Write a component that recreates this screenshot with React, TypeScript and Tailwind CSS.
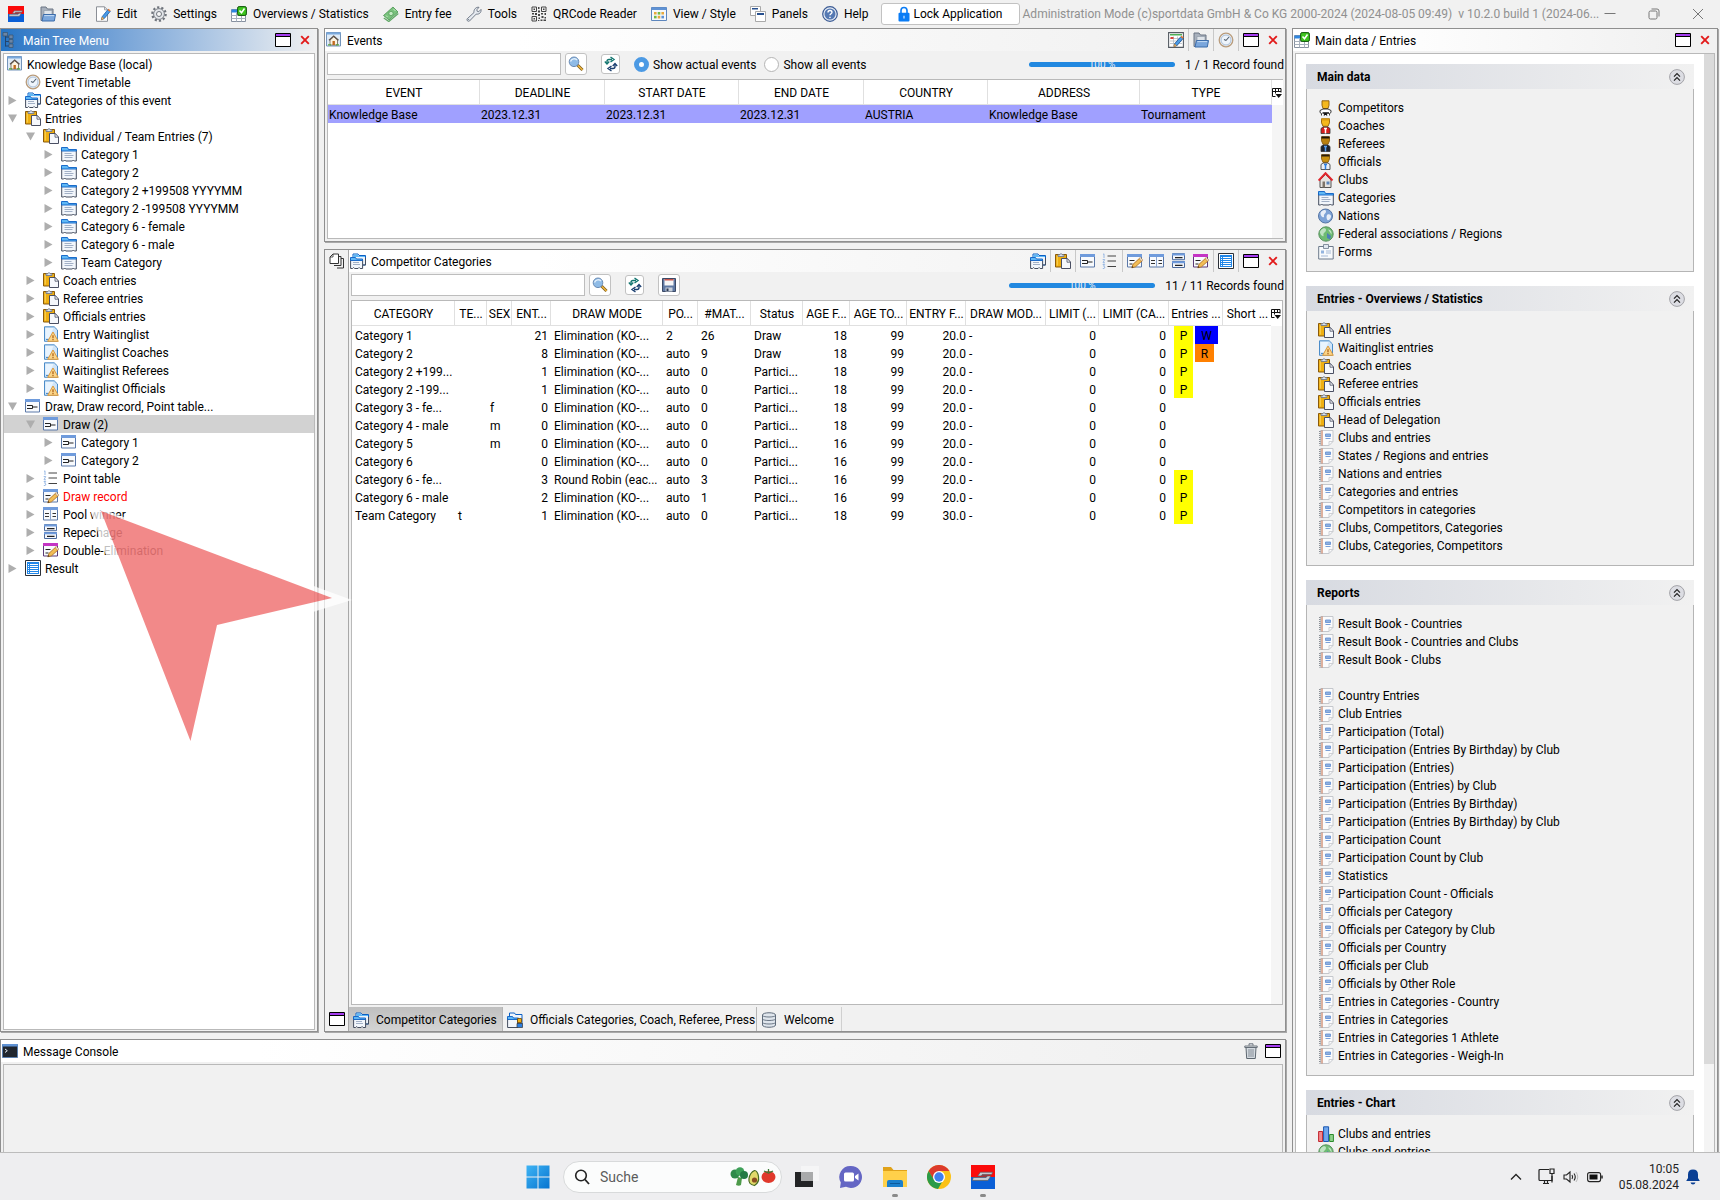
import type { ComponentType, ReactNode } from "react";
import clsx from "clsx";

type IconProps = { className?: string };
type Icon = ComponentType<IconProps>;

function Svg({ children, className, box = "0 0 16 16" }: { children: ReactNode; className?: string; box?: string }) {
  return (
    <svg viewBox={box} className={clsx("shrink-0", className ?? "size-4")} fill="none" aria-hidden="true">
      {children}
    </svg>
  );
}

/* ===== App icons ===== */
const Logo: Icon = (p) => (
  <Svg {...p}>
    <path d="M0 0h16v8H0z" fill="#fb0a0a" />
    <path d="M0 8h16v8H0z" fill="#0b5fd6" />
    <path d="M14.500 4.800H6.200L4.500 7.300h6.300l-.7 1H1.500l-.6 2h10.400l2-3H7l.5-1h6.300z" fill="#c9ccd2" stroke="#555b66" strokeWidth=".5" />
  </Svg>
);

const FolderOpen: Icon = (p) => (
  <Svg {...p}>
    <path d="M1 1h5l1.500 2H13v11.500H1z" fill="#a9b1bd" stroke="#6b7583" />
    <path d="M4 4.500h8v5H4z" fill="#dfe4ea" stroke="#8a95a3" strokeWidth=".6" />
    <path d="M3.500 8.500h12l-1.200 6.500H2z" fill="#7aa6dc" stroke="#3b6cab" />
    <path d="M4.300 9.600h9.800" stroke="#c4dbf4" />
  </Svg>
);

const EditPage: Icon = (p) => (
  <Svg {...p}>
    <path d="M1.500.8h8l3 3v11.500h-11z" fill="#fff" stroke="#8b8f96" />
    <path d="M9.500.8v3h3" stroke="#8b8f96" strokeWidth=".8" />
    <path d="M6.500 13.500l.8-3L13 3.500l2.300 1.800L9.300 12.500z" fill="#4a9be6" stroke="#1c5fae" strokeWidth=".8" />
    <path d="M6.300 14l.8-3.100 1.900 1.700z" fill="#f6c56c" stroke="#b5702a" strokeWidth=".5" />
    <path d="M12.600 4l1-1.200 2 1.700-1 1.200z" fill="#e8772e" />
  </Svg>
);

const EditTable: Icon = (p) => (
  <Svg {...p}>
    <path d="M.6.600h14.800v14.800H.6z" fill="#fff" stroke="#555b63" strokeWidth="1.100" />
    <path d="M2 2h12v1.500H2z" fill="#4fae57" />
    <path d="M2 6.500h12M2 9h12M2 11.500h12M5.500 4.500v9.500M9.500 4.500v9.500" stroke="#b6bcc4" strokeWidth=".8" />
    <path d="M2.500 5h3v2h-3z" fill="#d9433a" />
    <path d="M6 14.500l.8-3L13 4.500l2.300 1.800L9 13.500z" fill="#4a9be6" stroke="#1c4f8e" strokeWidth=".8" />
    <path d="M5.800 15l.8-3 1.900 1.500z" fill="#f6c56c" stroke="#b5702a" strokeWidth=".5" />
    <path d="M12.600 5l1-1.200 2 1.700-1 1.200z" fill="#e8772e" />
  </Svg>
);

const Gear: Icon = (p) => (
  <Svg {...p}>
    <circle cx="8" cy="8" r="6.700" stroke="#6f747c" strokeWidth="2.200" strokeDasharray="2.200 2.010" />
    <circle cx="8" cy="8" r="5.400" fill="#e2e5e9" stroke="#71767e" strokeWidth=".9" />
    <circle cx="8" cy="8" r="2.500" fill="#f6f6f6" stroke="#71767e" />
  </Svg>
);

const TableCheck: Icon = (p) => (
  <Svg {...p}>
    <path d="M.5 3.500h14v12H.5z" fill="#fff" stroke="#8791a0" />
    <path d="M.5 3.500h9v3h-9z" fill="#2f86e0" />
    <path d="M.5 9.500h14M.5 12.500h14M5.500 6.500v9M10.500 6.500v9" stroke="#a8b1bd" />
    <rect x="6.600" y=".6" width="8.800" height="8.800" rx="1.500" fill="#3dc41e" stroke="#12550c" />
    <path d="M8.500 4.500l2 2.300 3-4.300" stroke="#fff" strokeWidth="1.500" />
  </Svg>
);

const Money: Icon = (p) => (
  <Svg {...p}>
    <path d="M.5 9.500L10 1l5 5-9 8z" fill="#79c27d" stroke="#4a9650" strokeWidth=".8" />
    <path d="M.8 12l5 3.500L15.300 7.500" stroke="#5fa865" strokeWidth="1.300" />
    <circle cx="8" cy="7.500" r="2.200" fill="#c3eac2" stroke="#4a9650" strokeWidth=".7" />
    <path d="M3 9.500l1.500 1.500M10.500 3l2 2" stroke="#c3eac2" />
  </Svg>
);

const Wrench: Icon = (p) => (
  <Svg {...p}>
    <path
      d="M1.200 12.800L8 6.500C7.500 3.500 10 .8 13 1.300L10.800 3.800l.4 1.500 1.600.4 2.200-2.300c.6 3-1.800 5.200-4.800 4.700L3.500 15c-1.500 1-3.300-.8-2.300-2.200z"
      fill="#e6eaf0"
      stroke="#66707f"
      strokeWidth=".9"
    />
    <circle cx="2.600" cy="13.500" r=".6" fill="#66707f" />
  </Svg>
);

const QrCode: Icon = (p) => (
  <Svg {...p}>
    <path d="M1 1h4.500v4.500H1zM10.500 1H15v4.500h-4.500zM1 10.500h4.500V15H1z" stroke="#444" />
    <path
      d="M2.500 2.500H4V4H2.500zM12 2.500h1.500V4H12zM2.500 12H4v1.500H2.500zM7 1h1.500v2H7zM7 4.500h2v2H7zM1 7h2v1.500H1zM4 7h2v2H4zM7 8h2v2H7zM10 7h2v1.500h-2zM13.500 7H15v2h-1.500zM10.500 10h2v2h-2zM7.500 11.500H9V13H7.500zM13.500 11H15v1.500h-1.500zM9.500 13.500h2V15h-2zM12.500 13.500H15V15h-2.500zM7 14h1.300v1H7z"
      fill="#444"
    />
  </Svg>
);

const ViewStyle: Icon = (p) => (
  <Svg {...p}>
    <path d="M.5 1.500h15v13H.5z" fill="#f4f8fd" stroke="#5d86bd" />
    <path d="M.5 1.500h15v2.500H.5z" fill="#5f92d4" />
    <path d="M3 6h2.600v2.600H3zM10.400 6H13v2.600h-2.600zM6.700 9.800h2.600v2.600H6.700z" fill="#e9a93c" />
    <path d="M6.700 6h2.600v2.600H6.700z" fill="#72b945" />
    <path d="M3 9.800h2.600v2.600H3z" fill="#72b945" />
    <path d="M10.400 9.800H13v2.600h-2.600z" fill="#5f92d4" />
  </Svg>
);

const PanelsIcon: Icon = (p) => (
  <Svg {...p}>
    <path d="M.5.5h10v9H.5z" fill="#fff" stroke="#a9a9a9" />
    <path d="M2 2h6v1.500H2z" fill="#27508f" />
    <path d="M5.500 5.500h10v10h-10z" fill="#fff" stroke="#a9a9a9" />
    <path d="M7 7h7v2H7z" fill="#27508f" />
  </Svg>
);

const Help: Icon = (p) => (
  <Svg {...p}>
    <circle cx="8" cy="8" r="7.300" fill="#e6ecf5" stroke="#3a5a94" strokeWidth="1.200" />
    <circle cx="8" cy="8" r="5.500" fill="#5579b3" />
    <path d="M6 6.500c0-2.800 4-2.600 4-.2 0 1.500-2 1.500-2 3M8 10.800v1.300" stroke="#fff" strokeWidth="1.400" />
  </Svg>
);

const Lock: Icon = (p) => (
  <Svg {...p}>
    <path d="M5 7V4.500a3 3 0 016 0V7" stroke="#0a7cf5" strokeWidth="1.600" />
    <rect x="2.500" y="6.800" width="11" height="8.700" rx="1" fill="#0a7cf5" />
    <path d="M8 9.800v2.800" stroke="#d7e9ff" strokeWidth="1.200" />
  </Svg>
);

const TreeIcon: Icon = (p) => (
  <Svg {...p}>
    <path d="M3.500 3v11.500M3.500 5H7M3.500 9.500H7M3.500 14H7" stroke="#22456f" />
    <path d="M1 .5h4.500V4H1zM7 3h4v3.500H7zM7 7.500h4V11H7zM7 12h4v3.500H7z" fill="#6b85a5" stroke="#39546f" strokeWidth=".7" />
  </Svg>
);

const HomeWindow: Icon = (p) => (
  <Svg {...p}>
    <path d="M.5.500h14v13.500H.5z" fill="#dfebf7" stroke="#7394bb" />
    <path d="M.5.500h14v2H.5z" fill="#7aa9dc" />
    <path d="M4 8v5h7.500V8L7.700 4.800z" fill="#fdf3df" stroke="#6b6055" strokeWidth=".8" />
    <path d="M3 8.300l4.700-4.200 4.800 4.200" stroke="#5c5048" strokeWidth="1.200" />
    <path d="M6.500 9h2.400v4H6.500z" fill="#c06a1e" />
    <path d="M2 12.800h3M10 12.800h3" stroke="#57a53a" strokeWidth="1.200" />
  </Svg>
);

const Clock: Icon = (p) => (
  <Svg {...p}>
    <circle cx="8" cy="8" r="6.800" fill="#eef4fb" stroke="#b99c7c" strokeWidth="1.300" />
    <circle cx="8" cy="8" r="5" stroke="#a9bfd8" />
    <path d="M8 8.500L11 5M8.200 8.500L6 7.500" stroke="#4f5d6c" strokeWidth="1.100" />
  </Svg>
);

const Category: Icon = (p) => (
  <Svg {...p}>
    <path d="M.7 3V15h2l1-1 1 1h6.600l1-1 1 1h2V4.500H7.500" fill="#f2f6fb" stroke="#444d5e" />
    <path d="M.5 1.500h6l1 2H15.500V5H.5z" fill="#5fb8f5" stroke="#0b5fc4" strokeWidth=".9" />
    <path d="M3.500 7.500h7M3.500 9.500h9M3.500 11.500h8" stroke="#98a8bf" strokeWidth=".9" />
  </Svg>
);

const Categories: Icon = (p) => (
  <Svg {...p}>
    <path d="M3 4V1h5l1 1.500h6.500V12H13" fill="#eef4fb" stroke="#0b5fc4" />
    <path d="M3.500 1.500h4l1 1.500h6.500v1H3.500z" fill="#5fb8f5" />
    <path d="M15.500 5v7H13" stroke="#444d5e" />
    <path d="M.6 6v9.500h2l1-1 1 1h3.500l1-1 1 1h2.500V7" fill="#f2f6fb" stroke="#444d5e" />
    <path d="M.5 4.500h5l1 1.500h6v1.500H.5z" fill="#5fb8f5" stroke="#0b5fc4" strokeWidth=".9" />
    <path d="M3 9.500h6M3 11.500h7" stroke="#98a8bf" strokeWidth=".9" />
  </Svg>
);

const Clipboard: Icon = (p) => (
  <Svg {...p}>
    <path d="M.5 1.500h11v12.500H.5z" fill="#efaf12" stroke="#8a5a0a" />
    <path d="M2.300 3v9.500" stroke="#f9d25a" />
    <path d="M3 3.500V1.800h1.600Q6 -.8 7.400 1.800H9v1.700z" fill="#dbe3ee" stroke="#66718a" strokeWidth=".8" />
    <path d="M6.500 5.500h5.800L15.500 9v6.500h-9z" fill="#f6f8fc" stroke="#4a4f63" />
    <path d="M12 5.500V9.200h3.500" stroke="#4a4f63" strokeWidth=".8" />
  </Svg>
);

const Waiting: Icon = (p) => (
  <Svg {...p}>
    <path d="M1.500.8h9.700L14.500 4v11.300h-13z" fill="#cfe4f8" stroke="#4b8cc9" />
    <path d="M2.500 2l8 0L6 12H2.500z" fill="#e9f4fe" />
    <path d="M3 13.500h3" stroke="#4b8cc9" />
    <path d="M10 6l5.300 9.300H4.700z" fill="#fbd589" stroke="#dd9a3d" />
    <path d="M10 9.200v3M10 13v1.200" stroke="#a85a12" strokeWidth="1.200" />
  </Svg>
);

function WindowFrame({ bar = "#6f9bdc", edge = "#5b78a8" }: { bar?: string; edge?: string }) {
  return (
    <>
      <path d="M.5 2.500h14v11.500H.5z" fill="#f8fafd" stroke={edge} />
      <path d="M0 1h15v3H0z" fill={bar} />
    </>
  );
}

const Draw: Icon = (p) => (
  <Svg {...p}>
    <WindowFrame />
    <path d="M2 7.500h5.500v1.500h5M2 10.500h5.500V9" stroke="#222" />
  </Svg>
);

const Pencil = () => (
  <>
    <path d="M4.800 14.800l1.200-3.500 6.500-6 2.700 2.500-6.700 6z" fill="#f2bd55" stroke="#a86a1c" strokeWidth=".8" />
    <path d="M12 5.700l1.300-1.200 2.600 2.400-1.300 1.300z" fill="#e9e0d0" stroke="#a86a1c" strokeWidth=".5" />
    <path d="M4.600 15l.7-2 1.300 1.300z" fill="#4a3520" />
  </>
);

const DrawRecord: Icon = (p) => (
  <Svg {...p}>
    <WindowFrame />
    <path d="M2.500 7.500h5M2.500 11h3" stroke="#222" />
    <Pencil />
  </Svg>
);

const DoubleElim: Icon = (p) => (
  <Svg {...p}>
    <WindowFrame bar="#c434c4" edge="#5b3a78" />
    <path d="M2.500 7.500h5M2.500 11h3" stroke="#222" />
    <Pencil />
  </Svg>
);

const Pool: Icon = (p) => (
  <Svg {...p}>
    <WindowFrame />
    <path d="M7.500 4v10" stroke="#8ca6cf" />
    <path d="M2 7.500h4M2 10.500h4M9.500 7.500h3.500M9.500 10.500h3.500" stroke="#333" />
  </Svg>
);

const Repechage: Icon = (p) => (
  <Svg {...p}>
    <path d="M1.500.7h12v6H1.500zM1.500 8.500h12v6H1.500z" fill="#f4f7fc" stroke="#4c6a9c" />
    <path d="M1 .5h13v2H1zM1 8.300h13v2H1z" fill="#6f9bdc" />
    <path d="M4 4.600h7.500M4 12.400h7.500" stroke="#222" strokeWidth="1.200" />
  </Svg>
);

const PointTable: Icon = (p) => (
  <Svg {...p}>
    <path d="M5.500 3H14M5.500 8H14M5.500 13.500H14" stroke="#444" />
    <path d="M1 1.500l1-.7V5M.7 6.500h2L1 9.800h2M.7 11.500h2l-1.200 1.700L3 14l-.8 1.500H.8" stroke="#8fb2e2" strokeWidth=".9" />
  </Svg>
);

const Result: Icon = (p) => (
  <Svg {...p}>
    <path d="M.5.500h15v15H.5z" fill="#fff" stroke="#2b3038" />
    <path d="M2 2h12v12H2z" fill="#2086e8" />
    <path d="M5 4.500h8M5 6.500h8M5 8.500h8M5 10.500h8M5 12.500h8M3 4.500h1M3 6.500h1M3 8.500h1M3 10.500h1M3 12.500h1" stroke="#fff" />
  </Svg>
);

const Report: Icon = (p) => (
  <Svg {...p}>
    <path d="M2.500.5h12.500v11l-4 4h-8.500z" fill="#fbfbfc" stroke="#c4c7cc" />
    <path d="M11 15.500v-4h4" stroke="#c4c7cc" strokeWidth=".8" />
    <path d="M4 .5v15" stroke="#b8562c" strokeWidth=".9" />
    <path d="M1.800 1v14.500" stroke="#8a8f96" strokeWidth="1.600" strokeDasharray="1 1" />
    <path d="M7.500 4h5v2.500h-5zM7.500 8.500h5" fill="#8fb0e0" stroke="#6a94d4" strokeWidth=".9" />
  </Svg>
);

function Person({ head, hair, body, mark }: { head: string; hair: string; body: string; mark: string }) {
  return (
    <Svg>
      <path d="M3.500.8h8v4L10 8.300H5L3.500 4.800z" fill={head} stroke="#8a5a0a" strokeWidth=".9" />
      <path d="M3.500.5h8v2h-8z" fill={hair} />
      <path d="M3 15.500v-5L5 9h5l2 1.500v5z" fill={body} stroke="#333" strokeWidth=".8" />
      <path d="M6 10.500h3M7.500 10.500v5" stroke={mark} strokeWidth="1.500" />
    </Svg>
  );
}

const Competitor: Icon = () => (
  <Svg>
    <path d="M4 .8h7v4.500L10 8.500H5L4 5.300z" fill="#f5b81c" stroke="#8a5a0a" strokeWidth=".9" />
    <path d="M3.500 15.500v-2l-1.500-1v-2L5 9h5l3 1.500v2l-1.500 1v2" fill="#fff" stroke="#222" strokeWidth=".9" />
    <path d="M4.500 13h6.500M7.500 13L6 15.500M7.500 13L9 15.500" stroke="#111" strokeWidth="1.300" />
  </Svg>
);
const Coach: Icon = () => <Person head="#f5b81c" hair="#d99a10" body="#d81e1e" mark="#fff" />;
const Referee: Icon = () => <Person head="#b9800f" hair="#1d1408" body="#1c222e" mark="#5aa0f0" />;
const Official: Icon = () => <Person head="#c8900f" hair="#2b1c08" body="#e9eef6" mark="#2c7ee0" />;

const Club: Icon = (p) => (
  <Svg {...p}>
    <path d="M2 8L7.500 2.500 13 8v7.500H2z" fill="#e5e3df" stroke="#555" />
    <path d="M.6 8.500L7.500 1.200l7 7.300" stroke="#e0262d" strokeWidth="2" />
    <path d="M4.500 9.500H7v6H4.500z" fill="#7d7469" />
    <path d="M8.500 9.500h3v3h-3z" fill="#5b84b8" />
  </Svg>
);

const Globe: Icon = (p) => (
  <Svg {...p}>
    <circle cx="7.500" cy="8" r="7" fill="#7ea3d6" stroke="#5474a4" />
    <path d="M4 3c2-1.500 4-1.500 4 .5S5.500 6 6 8s-2 1.500-3-.5S2.500 4 4 3zM9.500 6.500c2-1 4 .5 3.500 2.500s-2.500 4-3.500 3-1.500-4.500 0-5.500z" fill="#e8eff8" />
  </Svg>
);

const GlobeGreen: Icon = (p) => (
  <Svg {...p}>
    <circle cx="8" cy="8" r="7.200" fill="#6dbb72" stroke="#59915e" />
    <path d="M3 4c2-2.500 5-2.500 5 0S5 6.500 5.500 9 3.500 10 2.500 8 2 5.500 3 4zM10 3.500c3 0 4 3 3.500 5" fill="#bfe3c3" />
    <path d="M9 7l4 3-1 3.500L9 12z" fill="#4b7fb6" />
  </Svg>
);

const Form: Icon = (p) => (
  <Svg {...p}>
    <path d="M.7 2.500h14.500v12.500H.7z" fill="#f8fafc" stroke="#6d7a8c" />
    <path d="M5.500.5h5v4h-5z" fill="#e1e8f0" stroke="#6d7a8c" strokeWidth=".8" />
    <path d="M3 6.500h3v3H3z" fill="#93b4df" />
    <path d="M8 7h5M8 9h5M3 12h7" stroke="#a6bad6" />
  </Svg>
);

const BarChart: Icon = (p) => (
  <Svg {...p}>
    <path d="M.6 5.500h4v10h-4z" fill="#f2878c" stroke="#c2242c" />
    <path d="M5.600.8h5v14.700h-5z" fill="#6fa6ee" stroke="#1a57b0" />
    <path d="M11.600 8.500h3.800v7h-3.800z" fill="#8fd18b" stroke="#2b8a2b" />
  </Svg>
);

const Magnifier: Icon = (p) => (
  <Svg {...p}>
    <path d="M9.500 9l5 5" stroke="#7a5a1e" strokeWidth="3" />
    <path d="M10 9.500l4.500 4.500" stroke="#efb63c" strokeWidth="1.600" />
    <circle cx="6" cy="5.800" r="4.800" fill="#8fbbe6" stroke="#6b8cb5" />
    <path d="M2.500 5.500c1-3 5-3.500 6.500-1.500" stroke="#e3f0fc" strokeWidth="1.400" />
  </Svg>
);

const Refresh: Icon = (p) => (
  <Svg {...p}>
    <path d="M4 7.500V5.500Q4 3.500 6 3.500h3M7.500 1l3.500 2.500L7.500 6" stroke="#12756f" strokeWidth="1.400" />
    <path d="M1.800 5.500L4 8l2.300-2.500" stroke="#12756f" strokeWidth="1.300" />
    <path d="M12 8v2.500q0 2-2 2H7M8.500 15L5 12.500 8.500 10" stroke="#1b3f70" strokeWidth="1.400" />
    <path d="M9.700 10L12 7.500l2.200 2.500" stroke="#1b3f70" strokeWidth="1.300" />
  </Svg>
);

const Save: Icon = (p) => (
  <Svg {...p}>
    <path d="M1.500 1.500h13v13h-13z" fill="#5f79a3" stroke="#3c4a66" />
    <path d="M3.500 2h9v6.500h-9z" fill="#f6f6f6" />
    <path d="M3.500 2h9v1.500h-9z" fill="#c8574f" />
    <path d="M4.500 10.500h7v4h-7z" fill="#c9d0da" />
    <path d="M5.500 11.500h2V14h-2z" fill="#2b3852" />
  </Svg>
);

const Maximize: Icon = (p) => (
  <Svg {...p}>
    <path d="M.5 1.500h15v13H.5z" fill="#fff" stroke="#000" />
    <path d="M1 2h14v2H1z" fill="#a53df0" />
    <path d="M.5 4.500h15" stroke="#000" />
  </Svg>
);

const CloseX: Icon = (p) => (
  <Svg {...p} box="0 0 10 10">
    <path d="M1.200 1.200l7.600 7.600M8.800 1.200L1.200 8.800" stroke="#e21a1a" strokeWidth="1.900" />
  </Svg>
);

const Pages: Icon = (p) => (
  <Svg {...p}>
    <path d="M4 1h5.500v9.500H1V4z" fill="#fff" stroke="#333" />
    <path d="M9.500 3.500H12v9H5M12 5.500h2.500V15H8" stroke="#333" />
    <path d="M1 4h3V1" stroke="#333" strokeWidth=".8" />
  </Svg>
);

const Trash: Icon = (p) => (
  <Svg {...p}>
    <path d="M3 4.500h10l-.7 11H3.700z" fill="#d5dbe1" stroke="#5d6770" />
    <path d="M1.800 3h12.400v1.500H1.800zM6 2.500V.8h4v1.700" fill="#e5e9ed" stroke="#5d6770" strokeWidth=".9" />
    <path d="M6 6v8M8 6v8M10 6v8" stroke="#7d8790" strokeWidth=".9" />
  </Svg>
);

const ConsoleIcon: Icon = (p) => (
  <Svg {...p}>
    <path d="M.5 1.500h15v13H.5z" fill="#20262e" stroke="#5b7fae" />
    <path d="M.5 1h15v2.500H.5z" fill="#5f92d4" />
    <path d="M3 6l2.300 1.700L3 9.500" stroke="#e8eef5" />
  </Svg>
);

const OfficialCategories: Icon = (p) => (
  <Svg {...p}>
    <path d="M2.500 4V1h5l1 1.500h6.500V12H2.500z" fill="#eef4fb" stroke="#0b5fc4" />
    <path d="M.6 6v9.500h10V7" fill="#f2f6fb" stroke="#444d5e" />
    <path d="M.5 4.500h5l1 1.500h5v1.500H.5z" fill="#5fb8f5" stroke="#0b5fc4" strokeWidth=".9" />
    <path d="M10.500 6.500h4v4h-4z" fill="#efaf12" stroke="#6b4408" strokeWidth=".8" />
    <path d="M10 15.500v-4h5.500v4z" fill="#2c7ee0" stroke="#333" strokeWidth=".7" />
  </Svg>
);

const Database: Icon = (p) => (
  <Svg {...p}>
    <path d="M1.500 3c0-3 13-3 13 0v10c0 3-13 3-13 0z" fill="#dfe5ec" stroke="#5f6b7a" />
    <path d="M1.500 3.500c1 2 12 2 13 0M1.500 7c1 2 12 2 13 0M1.500 10.500c1 2 12 2 13 0" stroke="#5f6b7a" strokeWidth=".9" />
  </Svg>
);

const ColumnControl: Icon = (p) => (
  <Svg {...p} box="0 0 10 10">
    <path d="M.5 8.500v-8h8.500v4M.5 3.500h8.500M3.500.5v5M6.500.5v3.500M.5 8.500h3" stroke="#111" />
    <path d="M3.500 6h6.500L6.700 10z" fill="#111" />
  </Svg>
);

/* ===== Data ===== */
const menu: { label: string; icon: Icon }[] = [
  { label: "File", icon: FolderOpen },
  { label: "Edit", icon: EditPage },
  { label: "Settings", icon: Gear },
  { label: "Overviews / Statistics", icon: TableCheck },
  { label: "Entry fee", icon: Money },
  { label: "Tools", icon: Wrench },
  { label: "QRCode Reader", icon: QrCode },
  { label: "View / Style", icon: ViewStyle },
  { label: "Panels", icon: PanelsIcon },
  { label: "Help", icon: Help },
];

type Node = { level: 0 | 1 | 2 | 3; label: string; icon: Icon; open?: boolean; leaf?: boolean; selected?: boolean; red?: boolean };

const tree: Node[] = [
  { level: 0, label: "Knowledge Base (local)", icon: HomeWindow, leaf: true },
  { level: 1, label: "Event Timetable", icon: Clock, leaf: true },
  { level: 1, label: "Categories of this event", icon: Categories },
  { level: 1, label: "Entries", icon: Clipboard, open: true },
  { level: 2, label: "Individual / Team Entries (7)", icon: Clipboard, open: true },
  { level: 3, label: "Category 1", icon: Category },
  { level: 3, label: "Category 2", icon: Category },
  { level: 3, label: "Category 2 +199508 YYYYMM", icon: Category },
  { level: 3, label: "Category 2 -199508 YYYYMM", icon: Category },
  { level: 3, label: "Category 6 - female", icon: Category },
  { level: 3, label: "Category 6 - male", icon: Category },
  { level: 3, label: "Team Category", icon: Category },
  { level: 2, label: "Coach entries", icon: Clipboard },
  { level: 2, label: "Referee entries", icon: Clipboard },
  { level: 2, label: "Officials entries", icon: Clipboard },
  { level: 2, label: "Entry Waitinglist", icon: Waiting },
  { level: 2, label: "Waitinglist Coaches", icon: Waiting },
  { level: 2, label: "Waitinglist Referees", icon: Waiting },
  { level: 2, label: "Waitinglist Officials", icon: Waiting },
  { level: 1, label: "Draw, Draw record, Point table...", icon: Draw, open: true },
  { level: 2, label: "Draw (2)", icon: Draw, open: true, selected: true },
  { level: 3, label: "Category 1", icon: Draw },
  { level: 3, label: "Category 2", icon: Draw },
  { level: 2, label: "Point table", icon: PointTable },
  { level: 2, label: "Draw record", icon: DrawRecord, red: true },
  { level: 2, label: "Pool winner", icon: Pool },
  { level: 2, label: "Repechage", icon: Repechage },
  { level: 2, label: "Double-Elimination", icon: DoubleElim },
  { level: 1, label: "Result", icon: Result },
];

const indent = ["pl-[3px]", "pl-[4px]", "pl-[22px]", "pl-[40px]"];

const eventColumns = [
  { label: "EVENT", width: "w-[152px]" },
  { label: "DEADLINE", width: "w-[125px]" },
  { label: "START DATE", width: "w-[134px]" },
  { label: "END DATE", width: "w-[125px]" },
  { label: "COUNTRY", width: "w-[124px]" },
  { label: "ADDRESS", width: "w-[152px]" },
  { label: "TYPE", width: "w-[132px]" },
];

const eventRow = ["Knowledge Base", "2023.12.31", "2023.12.31", "2023.12.31", "AUSTRIA", "Knowledge Base", "Tournament"];

const categoryColumns = [
  { label: "CATEGORY", width: "w-[103px]" },
  { label: "TE...", width: "w-[32px]" },
  { label: "SEX", width: "w-[25px]" },
  { label: "ENT...", width: "w-[39px]", right: true },
  { label: "DRAW MODE", width: "w-[112px]" },
  { label: "PO...", width: "w-[35px]" },
  { label: "#MAT...", width: "w-[53px]" },
  { label: "Status", width: "w-[52px]" },
  { label: "AGE F...", width: "w-[47px]", right: true },
  { label: "AGE TO...", width: "w-[57px]", right: true },
  { label: "ENTRY F...", width: "w-[59px]", right: true, flush: true },
  { label: "DRAW MOD...", width: "w-[80px]" },
  { label: "LIMIT (...", width: "w-[53px]", right: true },
  { label: "LIMIT (CA...", width: "w-[70px]", right: true },
  { label: "Entries ...", width: "w-[54px]" },
  { label: "Short ...", width: "w-[49px]" },
];

const KO = "Elimination (KO-...";
const categoryRows: string[][] = [
  ["Category 1", "", "", "21", KO, "2", "26", "Draw", "18", "99", "20.0", "-", "0", "0", "PW", ""],
  ["Category 2", "", "", "8", KO, "auto", "9", "Draw", "18", "99", "20.0", "-", "0", "0", "PR", ""],
  ["Category 2 +199...", "", "", "1", KO, "auto", "0", "Partici...", "18", "99", "20.0", "-", "0", "0", "P", ""],
  ["Category 2 -199...", "", "", "1", KO, "auto", "0", "Partici...", "18", "99", "20.0", "-", "0", "0", "P", ""],
  ["Category 3 - fe...", "", "f", "0", KO, "auto", "0", "Partici...", "18", "99", "20.0", "-", "0", "0", "", ""],
  ["Category 4 - male", "", "m", "0", KO, "auto", "0", "Partici...", "18", "99", "20.0", "-", "0", "0", "", ""],
  ["Category 5", "", "m", "0", KO, "auto", "0", "Partici...", "16", "99", "20.0", "-", "0", "0", "", ""],
  ["Category 6", "", "", "0", KO, "auto", "0", "Partici...", "16", "99", "20.0", "-", "0", "0", "", ""],
  ["Category 6 - fe...", "", "", "3", "Round Robin (eac...", "auto", "3", "Partici...", "16", "99", "20.0", "-", "0", "0", "P", ""],
  ["Category 6 - male", "", "", "2", KO, "auto", "1", "Partici...", "16", "99", "20.0", "-", "0", "0", "P", ""],
  ["Team Category", "t", "", "1", KO, "auto", "0", "Partici...", "18", "99", "30.0", "-", "0", "0", "P", ""],
];

const flags: Record<string, string> = {
  P: "w-[19px] bg-[#ffff00]",
  W: "w-[23px] bg-[#0000ff]",
  R: "w-[19px] bg-[#ff8000]",
};

type Item = { label: string; icon: Icon } | null;
const reports = (labels: string[]): Item[] => labels.map((label) => (label ? { label, icon: Report } : null));

const sections: { title: string; items: Item[] }[] = [
  {
    title: "Main data",
    items: [
      { label: "Competitors", icon: Competitor },
      { label: "Coaches", icon: Coach },
      { label: "Referees", icon: Referee },
      { label: "Officials", icon: Official },
      { label: "Clubs", icon: Club },
      { label: "Categories", icon: Category },
      { label: "Nations", icon: Globe },
      { label: "Federal associations / Regions", icon: GlobeGreen },
      { label: "Forms", icon: Form },
    ],
  },
  {
    title: "Entries - Overviews / Statistics",
    items: [
      { label: "All entries", icon: Clipboard },
      { label: "Waitinglist entries", icon: Waiting },
      { label: "Coach entries", icon: Clipboard },
      { label: "Referee entries", icon: Clipboard },
      { label: "Officials entries", icon: Clipboard },
      { label: "Head of Delegation", icon: Clipboard },
      ...reports([
        "Clubs and entries",
        "States / Regions and entries",
        "Nations and entries",
        "Categories and entries",
        "Competitors in categories",
        "Clubs, Competitors, Categories",
        "Clubs, Categories, Competitors",
      ]),
    ],
  },
  {
    title: "Reports",
    items: reports([
      "Result Book - Countries",
      "Result Book - Countries and Clubs",
      "Result Book - Clubs",
      "",
      "Country Entries",
      "Club Entries",
      "Participation (Total)",
      "Participation (Entries By Birthday) by Club",
      "Participation (Entries)",
      "Participation (Entries) by Club",
      "Participation (Entries By Birthday)",
      "Participation (Entries By Birthday) by Club",
      "Participation Count",
      "Participation Count by Club",
      "Statistics",
      "Participation Count - Officials",
      "Officials per Category",
      "Officials per Category by Club",
      "Officials per Country",
      "Officials per Club",
      "Officials by Other Role",
      "Entries in Categories - Country",
      "Entries in Categories",
      "Entries in Categories 1 Athlete",
      "Entries in Categories - Weigh-In",
    ]),
  },
  {
    title: "Entries - Chart",
    items: [
      { label: "Clubs and entries", icon: BarChart },
      { label: "Clubs and entries", icon: GlobeGreen },
    ],
  },
];

/* ===== Building blocks ===== */
function Panel({ className, children }: { className?: string; children: ReactNode }) {
  return (
    <section className={clsx("flex flex-col border border-[#8f8f8f] bg-[#f1f1f1] shadow-[1px_1px_0_#a8a8a8]", className)}>
      {children}
    </section>
  );
}

function IconButton({ label, icon: I }: { label: string; icon: Icon }) {
  return (
    <button type="button" aria-label={label} className="flex items-center px-[3px]">
      <I />
    </button>
  );
}

const CloseButton = () => (
  <button type="button" aria-label="Close" className="mr-[7px] ml-[6px]">
    <CloseX className="size-[10px]" />
  </button>
);

const Divider = () => <span className="mx-px h-[22px] w-px bg-[#c8c8c8]" />;

function TitleBar({ title, icon: I, active, children }: { title: string; icon: Icon; active?: boolean; children?: ReactNode }) {
  return (
    <header
      className={clsx(
        "flex h-[22px] shrink-0 items-center pl-px",
        active ? "bg-linear-to-r from-[#2474c4] to-[#f1f1f1] text-white" : "bg-linear-to-r from-white from-20% to-[#f1f1f1] to-90%",
      )}
    >
      <I />
      <h2 className="ml-[5px] flex-1 truncate pt-[2px]">{title}</h2>
      {children}
    </header>
  );
}

function ToolButton({ label, icon: I, narrow }: { label: string; icon: Icon; narrow?: boolean }) {
  return (
    <button
      type="button"
      aria-label={label}
      className={clsx(
        "flex items-center justify-center rounded-[3px] border border-[#c2c2c2] bg-white",
        narrow ? "h-5 w-[19px]" : "h-[22px] w-[22px]",
      )}
    >
      <I />
    </button>
  );
}

function Progress({ text }: { text: string }) {
  return (
    <div className="ml-auto flex items-center gap-[10px]">
      <div className="h-[5px] w-[146px] rounded-full bg-[#2188e0] text-center text-[10px] leading-[5px] text-[#f1f1f1]">100 %</div>
      <span className="pt-[2px]">{text}</span>
    </div>
  );
}

function Gutter() {
  return (
    <div className="w-[11px] shrink-0 bg-[#f5f5f5]">
      <button type="button" aria-label="Column control" className="flex h-[25px] w-full items-center bg-white">
        <ColumnControl className="size-[10px]" />
      </button>
    </div>
  );
}

const headCell = "h-[25px] overflow-hidden border-r border-b border-[#e0e0e0] pt-[2px] pl-px text-center font-normal whitespace-nowrap";

function MenuBar() {
  return (
    <header className="flex h-7 shrink-0 items-center pl-2 whitespace-nowrap">
      <Logo />
      <nav className="ml-4 flex gap-[14px]">
        {menu.map(({ label, icon: I }) => (
          <button key={label} type="button" className="flex items-center gap-[6px]">
            <I />
            {label}
          </button>
        ))}
      </nav>
      <button
        type="button"
        className="ml-3 flex h-[22px] w-[139px] shrink-0 items-center gap-[2px] rounded-[3px] border border-[#c2c2c2] bg-white pl-[14px]"
      >
        <Lock />
        Lock Application
      </button>
      <p className="ml-[3px] text-[#909090]">
        Administration Mode (c)sportdata GmbH &amp; Co KG 2000-2024 (2024-08-05 09:49)&nbsp; v 10.2.0 build 1 (2024-06...
      </p>
      <div className="ml-auto flex items-center gap-8 pr-4 text-[#777]">
        <button type="button" aria-label="Minimize">
          <Svg className="size-3" box="0 0 12 12">
            <path d="M.5 5.500h11" stroke="currentColor" />
          </Svg>
        </button>
        <button type="button" aria-label="Restore">
          <Svg className="size-3" box="0 0 12 12">
            <rect x="1" y="3" width="8" height="8" rx="1.500" stroke="currentColor" />
            <path d="M3.500 1h5.500a2 2 0 012 2v5.500" stroke="currentColor" />
          </Svg>
        </button>
        <button type="button" aria-label="Close">
          <Svg className="size-3" box="0 0 12 12">
            <path d="M1 1l10 10M11 1L1 11" stroke="currentColor" />
          </Svg>
        </button>
      </div>
    </header>
  );
}

function TreePanel() {
  return (
    <Panel className="w-[318px] shrink-0">
      <TitleBar title="Main Tree Menu" icon={TreeIcon} active>
        <IconButton label="Maximize" icon={Maximize} />
        <CloseButton />
      </TitleBar>
      <ul role="tree" className="mx-[2px] mt-[2px] mb-px flex-1 border border-[#b9b9b9] bg-white pt-px">
        {tree.map(({ level, label, icon: I, open, leaf, selected, red }, i) => (
          <li
            key={i}
            role="treeitem"
            aria-expanded={leaf ? undefined : !!open}
            className={clsx("flex h-[18px] items-center whitespace-nowrap", indent[level], selected && "bg-[#d2d2d2]")}
          >
            {level > 0 && (
              <span className="flex w-[17px] shrink-0">
                {!leaf && (
                  <Svg className="size-[9px]" box="0 0 9 9">
                    <path d={open ? "M0 .5h9L4.500 8.500z" : "M.5 0v9l8-4.500z"} fill="#aeaeae" />
                  </Svg>
                )}
              </span>
            )}
            <I />
            <span className={clsx("ml-1 pt-[2px]", red && "text-[#ff0000]")}>{label}</span>
          </li>
        ))}
      </ul>
    </Panel>
  );
}

function EventsPanel() {
  return (
    <Panel className="h-[214px] shrink-0">
      <TitleBar title="Events" icon={HomeWindow}>
        <IconButton label="Edit event" icon={EditTable} />
        <Divider />
        <IconButton label="Open event" icon={FolderOpen} />
        <Divider />
        <IconButton label="Timetable" icon={Clock} />
        <Divider />
        <IconButton label="Maximize" icon={Maximize} />
        <CloseButton />
      </TitleBar>
      <div className="mt-[2px] flex h-[22px] shrink-0 items-center pr-px pl-[2px]">
        <input type="text" aria-label="Search events" className="h-[22px] w-[234px] border border-[#bdbdbd] bg-white px-1 outline-none" />
        <div className="ml-1 flex items-center gap-[14px]">
          <ToolButton label="Search" icon={Magnifier} />
          <ToolButton label="Refresh" icon={Refresh} narrow />
          <div className="flex gap-2">
            {["Show actual events", "Show all events"].map((label, i) => (
              <label key={label} className="flex items-center gap-1">
                <input
                  type="radio"
                  name="event-filter"
                  defaultChecked={i === 0}
                  className="size-[15px] appearance-none rounded-full border border-[#b5b5b5] bg-white checked:border-[5px] checked:border-[#4c9ae4]"
                />
                <span className="pt-[2px]">{label}</span>
              </label>
            ))}
          </div>
        </div>
        <Progress text="1 / 1 Record found" />
      </div>
      <div className="mx-[2px] mt-1 mb-[2px] flex flex-1 border border-[#b9b9b9] bg-white">
        <div className="flex-1">
          <table className="w-full table-fixed border-separate border-spacing-0">
            <thead>
              <tr>
                {eventColumns.map((c) => (
                  <th key={c.label} className={clsx(headCell, c.width)}>
                    {c.label}
                  </th>
                ))}
              </tr>
            </thead>
            <tbody>
              <tr className="bg-[#a0a0ff]">
                {eventRow.map((cell, i) => (
                  <td key={i} className="h-[18px] overflow-hidden pt-[2px] pl-px leading-4 whitespace-nowrap">
                    {cell}
                  </td>
                ))}
              </tr>
            </tbody>
          </table>
        </div>
        <Gutter />
      </div>
    </Panel>
  );
}

function CategoriesPanel() {
  return (
    <Panel className="min-h-0 flex-1">
      <div className="flex min-h-0 flex-1">
        {/* Minimized view strip */}
        <div className="flex w-6 shrink-0 flex-col items-center justify-between border-r border-[#a8a8a8] pt-[3px] pb-1">
          <Pages />
          <IconButton label="Restore view" icon={Maximize} />
        </div>
        <div className="flex min-w-0 flex-1 flex-col">
          <TitleBar title="Competitor Categories" icon={Categories}>
            <IconButton label="Categories" icon={Categories} />
            <Divider />
            <IconButton label="Entries" icon={Clipboard} />
            <Divider />
            <IconButton label="Draw" icon={Draw} />
            <IconButton label="Point table" icon={PointTable} />
            <Divider />
            <IconButton label="Draw record" icon={DrawRecord} />
            <IconButton label="Pool winner" icon={Pool} />
            <IconButton label="Repechage" icon={Repechage} />
            <IconButton label="Double-Elimination" icon={DoubleElim} />
            <Divider />
            <IconButton label="Result" icon={Result} />
            <Divider />
            <IconButton label="Maximize" icon={Maximize} />
            <CloseButton />
          </TitleBar>
          <div className="mt-[2px] flex h-[22px] shrink-0 items-center pr-px pl-[2px]">
            <input type="text" aria-label="Search categories" className="h-[22px] w-[234px] border border-[#bdbdbd] bg-white px-1 outline-none" />
            <div className="ml-1 flex items-center gap-[14px]">
              <ToolButton label="Search" icon={Magnifier} />
              <ToolButton label="Refresh" icon={Refresh} narrow />
              <ToolButton label="Save" icon={Save} />
            </div>
            <Progress text="11 / 11 Records found" />
          </div>
          <div className="mx-[2px] mt-1 flex min-h-0 flex-1 border border-[#b9b9b9] bg-white">
            <div className="min-w-0 flex-1">
              <table className="w-full table-fixed border-separate border-spacing-0">
                <thead>
                  <tr>
                    {categoryColumns.map((c) => (
                      <th key={c.label} className={clsx(headCell, c.width)}>
                        {c.label}
                      </th>
                    ))}
                  </tr>
                </thead>
                <tbody>
                  {categoryRows.map((row) => (
                    <tr key={row[0]}>
                      {row.map((cell, i) => {
                        const col = categoryColumns[i];
                        if (col.label === "Entries ...") {
                          return (
                            <td key={col.label} className="h-[18px]">
                              <div className="flex gap-[2px] pl-[5px] leading-4">
                                {cell.split("").map((f) => (
                                  <span key={f} className={clsx("h-[18px] pt-[2px] text-center", flags[f])}>
                                    {f}
                                  </span>
                                ))}
                              </div>
                            </td>
                          );
                        }
                        return (
                          <td
                            key={col.label}
                            className={clsx(
                              "h-[18px] overflow-hidden pt-[2px] leading-4 whitespace-nowrap",
                              col.right ? "text-right" : "pl-[3px]",
                              col.right && !col.flush && "pr-[3px]",
                            )}
                          >
                            {cell}
                          </td>
                        );
                      })}
                    </tr>
                  ))}
                </tbody>
              </table>
            </div>
            <Gutter />
          </div>
          <div className="mt-[2px] flex h-6 shrink-0 whitespace-nowrap">
            <button type="button" className="flex w-[154px] items-center gap-[7px] border-r border-[#b5b5b5] bg-linear-to-b from-[#bfbfbf] to-[#d4d4d4] pt-[2px] pl-1">
              <Categories />
              Competitor Categories
            </button>
            <button type="button" className="flex w-[254px] items-center gap-[7px] border-r border-[#b5b5b5] pt-[2px] pl-1">
              <OfficialCategories />
              Officials Categories, Coach, Referee, Press
            </button>
            <button type="button" className="flex w-[85px] items-center gap-[7px] border-r border-[#d0d0d0] pt-[2px] pl-1">
              <Database />
              Welcome
            </button>
          </div>
        </div>
      </div>
    </Panel>
  );
}

function ConsolePanel() {
  return (
    <Panel className="h-[113px] shrink-0 border-b-0">
      <TitleBar title="Message Console" icon={ConsoleIcon}>
        <IconButton label="Clear" icon={Trash} />
        <IconButton label="Maximize" icon={Maximize} />
        <span className="w-px" />
      </TitleBar>
      <div className="mx-[2px] mt-[2px] flex-1 border border-b-0 border-[#b9b9b9]" />
    </Panel>
  );
}

function Sidebar() {
  return (
    <Panel className="w-[426px] shrink-0 border-b-0">
      <TitleBar title="Main data / Entries" icon={TableCheck}>
        <IconButton label="Maximize" icon={Maximize} />
        <CloseButton />
      </TitleBar>
      <div className="mx-[2px] mt-[2px] flex min-h-0 flex-1 border border-b-0 border-[#b9b9b9] bg-white">
        <div className="flex flex-1 flex-col gap-[14px] overflow-hidden p-[10px]">
          {sections.map((s) => (
            <section key={s.title} className="shrink-0">
              <header className="flex h-[25px] items-center justify-between bg-linear-to-r from-[#d7dae1] to-[#f1f1f1] pr-[9px] pl-[11px]">
                <h3 className="font-bold">{s.title}</h3>
                <button type="button" aria-label="Collapse">
                  <Svg>
                    <circle cx="8" cy="8" r="7.400" fill="#dcdde3" stroke="#a3a3a8" />
                    <path d="M5 7.600l3-3 3 3M5 11.600l3-3 3 3" stroke="#222" strokeWidth="1.200" />
                  </Svg>
                </button>
              </header>
              <ul className="border border-t-0 border-[#b5b5b5] bg-[#f1f1f1] py-[10px] pl-[11px]">
                {s.items.map((item, i) => (
                  <li key={i} className="h-[18px]">
                    {item && (
                      <a href="#" className="flex h-[18px] items-center gap-1">
                        <item.icon />
                        {item.label}
                      </a>
                    )}
                  </li>
                ))}
              </ul>
            </section>
          ))}
        </div>
        <div className="w-[10px] bg-[#f4f4f4]">
          <div className="h-[92%] bg-[#dadada]" />
        </div>
      </div>
    </Panel>
  );
}

function Taskbar() {
  return (
    <footer className="flex h-12 shrink-0 items-center border-t border-[#bcbcbc] bg-[#eeeef0]">
      <div className="flex flex-1 items-center pl-[526px]">
        <button type="button" aria-label="Start">
          <Svg className="size-6" box="0 0 24 24">
            <path d="M.5.500h11v11H.5zM12.500.500h11v11h-11zM.5 12.500h11v11H.5zM12.500 12.500h11v11h-11z" fill="url(#win)" />
            <defs>
              <linearGradient id="win" x1="0" y1="0" x2="24" y2="24" gradientUnits="userSpaceOnUse">
                <stop stopColor="#3fb5f5" />
                <stop offset="1" stopColor="#0673cf" />
              </linearGradient>
            </defs>
          </Svg>
        </button>
        <div className="ml-[13px] flex h-8 w-[219px] items-center rounded-full border border-[#d8dadb] bg-[#fbfcfc] pr-[5px] pl-[10px]">
          <Svg className="size-4">
            <circle cx="7" cy="6.500" r="5.300" stroke="#222" strokeWidth="1.600" />
            <path d="M11 10.500l4 4.500" stroke="#222" strokeWidth="1.800" />
          </Svg>
          <input type="search" aria-label="Suche" placeholder="Suche" className="ml-[10px] w-0 flex-1 bg-transparent text-[14px] text-[#5c5c5c] outline-none placeholder:text-[#5c5c5c]" />
          <Svg className="h-5 w-[46px]" box="0 0 46 20">
            <path d="M8 10l-2 8q3 1.500 5 0l1-7z" fill="#4d9a4a" />
            <circle cx="5" cy="7" r="4.500" fill="#2f8a4a" />
            <circle cx="10" cy="4.500" r="4.300" fill="#3da058" />
            <circle cx="14" cy="8" r="4" fill="#247a45" />
            <path d="M24.500 3.500q3 0 4 6t-4 9q-6.500-1-5.500-7t5.500-8z" fill="#e1d96a" stroke="#466b22" strokeWidth="1.200" />
            <circle cx="24.500" cy="13" r="2.600" fill="#8a4d20" />
            <ellipse cx="38.500" cy="10" rx="7" ry="6" fill="#e0392c" />
            <path d="M38.500 2v3M34 4l4.500 2L43 4" stroke="#3a7a35" strokeWidth="1.300" />
          </Svg>
        </div>
        <div className="ml-[13px] flex items-center gap-5">
          <button type="button" aria-label="Task view">
            <Svg className="size-6" box="0 0 24 24">
              <path d="M0 7h18v15H0z" fill="#232426" />
              <path d="M6 1h18v15H6z" fill="#f6f6f6" fillOpacity=".82" />
              <path d="M6 7h12v9H6z" fill="#a9aaab" />
            </Svg>
          </button>
          <button type="button" aria-label="Chat">
            <Svg className="size-6" box="0 0 24 24">
              <path d="M12 1a11 11 0 11-5 20.800L1 23l.8-5.500A11 11 0 0112 1z" fill="#6466c4" />
              <rect x="5" y="7.500" width="10" height="9" rx="1.500" fill="#fff" />
              <path d="M16 11l3.500-2.500v7L16 13z" fill="#fff" />
            </Svg>
          </button>
          <button type="button" aria-label="Explorer" className="relative">
            <Svg className="size-6" box="0 0 24 24">
              <path d="M0 2h8l2.500 3H24v17H0z" fill="#e0a21a" />
              <path d="M0 6h24v16H0z" fill="#ffd04a" />
              <path d="M4 22v-5q0-2 2-2h12q2 0 2 2v5z" fill="#1b7fcc" />
              <path d="M7 18.500h10" stroke="#0c5a9c" />
            </Svg>
            <span className="absolute -bottom-2 left-[9px] h-[3px] w-[6px] rounded-full bg-[#8a8a8a]" />
          </button>
          <button type="button" aria-label="Chrome">
            <Svg className="size-6" box="0 0 24 24">
              <circle cx="12" cy="12" r="12" fill="#fbc116" />
              <path d="M1.600 6A12 12 0 0122.400 6H12l-5.200 9z" fill="#dc3a2c" />
              <path d="M1.600 6A12 12 0 0011 24l5.500-9.500H6.800z" fill="#2b9a48" />
              <circle cx="12" cy="12" r="6" fill="#fff" />
              <circle cx="12" cy="12" r="4.700" fill="#3f7fee" />
            </Svg>
          </button>
          <button type="button" aria-label="Sportdata" className="relative">
            <Logo className="size-6" />
            <span className="absolute -bottom-2 left-[9px] h-[3px] w-[6px] rounded-full bg-[#8a8a8a]" />
          </button>
        </div>
      </div>
      <div className="flex items-center pr-5 text-[#222]">
        <div className="flex items-center gap-2">
          <Svg className="mr-2 h-4 w-3" box="0 0 12 16">
            <path d="M1 10.500l5-5 5 5" stroke="#222" strokeWidth="1.300" />
          </Svg>
          <Svg className="size-[17px]" box="0 0 17 17">
            <path d="M11 1.500H2q-1 0-1 1v9q0 1 1 1h12V8M5 15.500h6M6.500 12.500v3M9.500 12.500v3" stroke="#222" strokeWidth="1.200" />
            <path d="M12 1h4v4.500h-4zM14 5.500v9" stroke="#222" strokeWidth="1.200" />
          </Svg>
          <Svg>
            <path d="M1 6v4h2.500L7 13V3L3.500 6z" stroke="#222" strokeWidth="1.100" />
            <path d="M9 6q1.300 2 0 4M11 4.500q2.500 3.500 0 7" stroke="#222" strokeWidth="1.100" />
            <path d="M13 3q3.500 5 0 10" stroke="#bbb" />
          </Svg>
          <Svg>
            <rect x=".6" y="3.600" width="13" height="9" rx="2" stroke="#222" strokeWidth="1.100" />
            <path d="M2.500 5.500h8v5h-8z" fill="#111" />
            <path d="M15 6.500v3" stroke="#222" strokeWidth="1.500" />
          </Svg>
        </div>
        <div className="mr-[7px] ml-4 text-right leading-4">
          <div>10:05</div>
          <div>05.08.2024</div>
        </div>
        <Svg className="h-4 w-[14px]" box="0 0 14 16">
          <path d="M7 .5q5 0 5 5V9l1.800 3H.2L2 9V5.500q0-5 5-5zM4.500 13.500h5Q9 15.500 7 15.500t-2.500-2z" fill="#0a3f94" />
        </Svg>
      </div>
    </footer>
  );
}

export default function App() {
  return (
    <div className="relative flex h-screen flex-col overflow-hidden bg-[#f1f1f1] font-[Roboto,sans-serif] text-[12px] leading-[18px] text-black">
      <MenuBar />
      <main className="flex min-h-0 flex-1 gap-[6px] pr-[2px]">
        <div className="flex min-w-0 flex-1 flex-col gap-[7px]">
          <div className="flex min-h-0 flex-1 gap-[6px]">
            <TreePanel />
            <div className="flex min-w-0 flex-1 flex-col gap-[7px]">
              <EventsPanel />
              <CategoriesPanel />
            </div>
          </div>
          <ConsolePanel />
        </div>
        <Sidebar />
      </main>
      <Taskbar />

      {/* Pointer arrow laid over the tree */}
      <Svg className="pointer-events-none absolute top-[490px] left-[80px] h-[310px] w-[280px]" box="0 0 280 310">
        <path d="M8 14L272 110 148 148 108 300z" fill="#fff" fillOpacity=".75" />
        <path d="M21 21L252 108 137 135 110.500 251z" fill="#e51414" fillOpacity=".5" />
      </Svg>
    </div>
  );
}
